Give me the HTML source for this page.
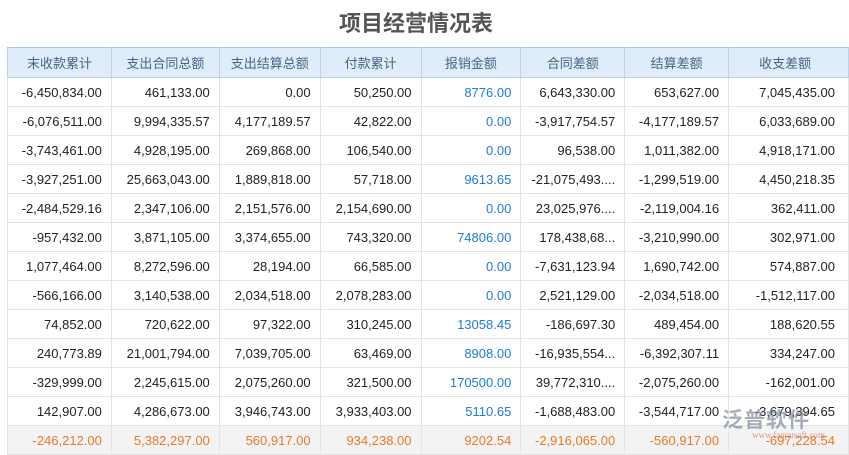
<!DOCTYPE html><html><head><meta charset="utf-8"><style>
body{margin:0;width:849px;height:450px;overflow:hidden;background:#fff;font-family:"Liberation Sans","Noto Sans CJK SC",sans-serif;}
.t{position:absolute;top:6px;left:0;width:832px;text-align:center;font-size:22px;font-weight:bold;color:#555;}
table{position:absolute;top:47px;left:7px;border-collapse:collapse;table-layout:fixed;font-size:13px;}
th{height:27px;background:#dfedfa;color:#4a6480;font-weight:normal;border:1px solid #b9d3ec;border-top:1px solid #a8c8e8;}
td{height:28px;border:1px solid #e3e3e3;text-align:right;padding:0 9px 0 0;color:#222;white-space:nowrap;overflow:hidden;}
td.b{color:#1e7be0}
tr.l td{background:#f3f3f3;color:#e8792a}
td.r{padding-right:13px}
.wm{position:absolute;left:722px;top:404px;font-size:21px;color:rgba(120,130,150,.65);font-weight:bold;letter-spacing:1px}
.wm2{position:absolute;left:752px;top:430px;font-size:9px;color:rgba(200,90,70,.6);font-family:"Liberation Serif",serif}
</style></head><body>
<div class="t">项目经营情况表</div>
<table>
<colgroup><col style="width:104px"><col style="width:108px"><col style="width:101px"><col style="width:101px"><col style="width:100px"><col style="width:104px"><col style="width:104px"><col style="width:120px"></colgroup>
<tr><th>末收款累计</th><th>支出合同总额</th><th>支出结算总额</th><th>付款累计</th><th>报销金额</th><th>合同差额</th><th>结算差额</th><th style="text-align:left;padding-left:30px">收支差额</th></tr>
<tr><td>-6,450,834.00</td><td>461,133.00</td><td>0.00</td><td>50,250.00</td><td class="b">8776.00</td><td>6,643,330.00</td><td>653,627.00</td><td class="r">7,045,435.00</td></tr>
<tr><td>-6,076,511.00</td><td>9,994,335.57</td><td>4,177,189.57</td><td>42,822.00</td><td class="b">0.00</td><td>-3,917,754.57</td><td>-4,177,189.57</td><td class="r">6,033,689.00</td></tr>
<tr><td>-3,743,461.00</td><td>4,928,195.00</td><td>269,868.00</td><td>106,540.00</td><td class="b">0.00</td><td>96,538.00</td><td>1,011,382.00</td><td class="r">4,918,171.00</td></tr>
<tr><td>-3,927,251.00</td><td>25,663,043.00</td><td>1,889,818.00</td><td>57,718.00</td><td class="b">9613.65</td><td>-21,075,493....</td><td>-1,299,519.00</td><td class="r">4,450,218.35</td></tr>
<tr><td>-2,484,529.16</td><td>2,347,106.00</td><td>2,151,576.00</td><td>2,154,690.00</td><td class="b">0.00</td><td>23,025,976....</td><td>-2,119,004.16</td><td class="r">362,411.00</td></tr>
<tr><td>-957,432.00</td><td>3,871,105.00</td><td>3,374,655.00</td><td>743,320.00</td><td class="b">74806.00</td><td>178,438,68...</td><td>-3,210,990.00</td><td class="r">302,971.00</td></tr>
<tr><td>1,077,464.00</td><td>8,272,596.00</td><td>28,194.00</td><td>66,585.00</td><td class="b">0.00</td><td>-7,631,123.94</td><td>1,690,742.00</td><td class="r">574,887.00</td></tr>
<tr><td>-566,166.00</td><td>3,140,538.00</td><td>2,034,518.00</td><td>2,078,283.00</td><td class="b">0.00</td><td>2,521,129.00</td><td>-2,034,518.00</td><td class="r">-1,512,117.00</td></tr>
<tr><td>74,852.00</td><td>720,622.00</td><td>97,322.00</td><td>310,245.00</td><td class="b">13058.45</td><td>-186,697.30</td><td>489,454.00</td><td class="r">188,620.55</td></tr>
<tr><td>240,773.89</td><td>21,001,794.00</td><td>7,039,705.00</td><td>63,469.00</td><td class="b">8908.00</td><td>-16,935,554...</td><td>-6,392,307.11</td><td class="r">334,247.00</td></tr>
<tr><td>-329,999.00</td><td>2,245,615.00</td><td>2,075,260.00</td><td>321,500.00</td><td class="b">170500.00</td><td>39,772,310....</td><td>-2,075,260.00</td><td class="r">-162,001.00</td></tr>
<tr><td>142,907.00</td><td>4,286,673.00</td><td>3,946,743.00</td><td>3,933,403.00</td><td class="b">5110.65</td><td>-1,688,483.00</td><td>-3,544,717.00</td><td class="r">-3,679,394.65</td></tr>
<tr class="l"><td>-246,212.00</td><td>5,382,297.00</td><td>560,917.00</td><td>934,238.00</td><td>9202.54</td><td>-2,916,065.00</td><td>-560,917.00</td><td class="r">-697,228.54</td></tr>
</table>
<div class="wm">泛普软件</div><div class="wm2">www.fanpusoft.com</div>
</body></html>
